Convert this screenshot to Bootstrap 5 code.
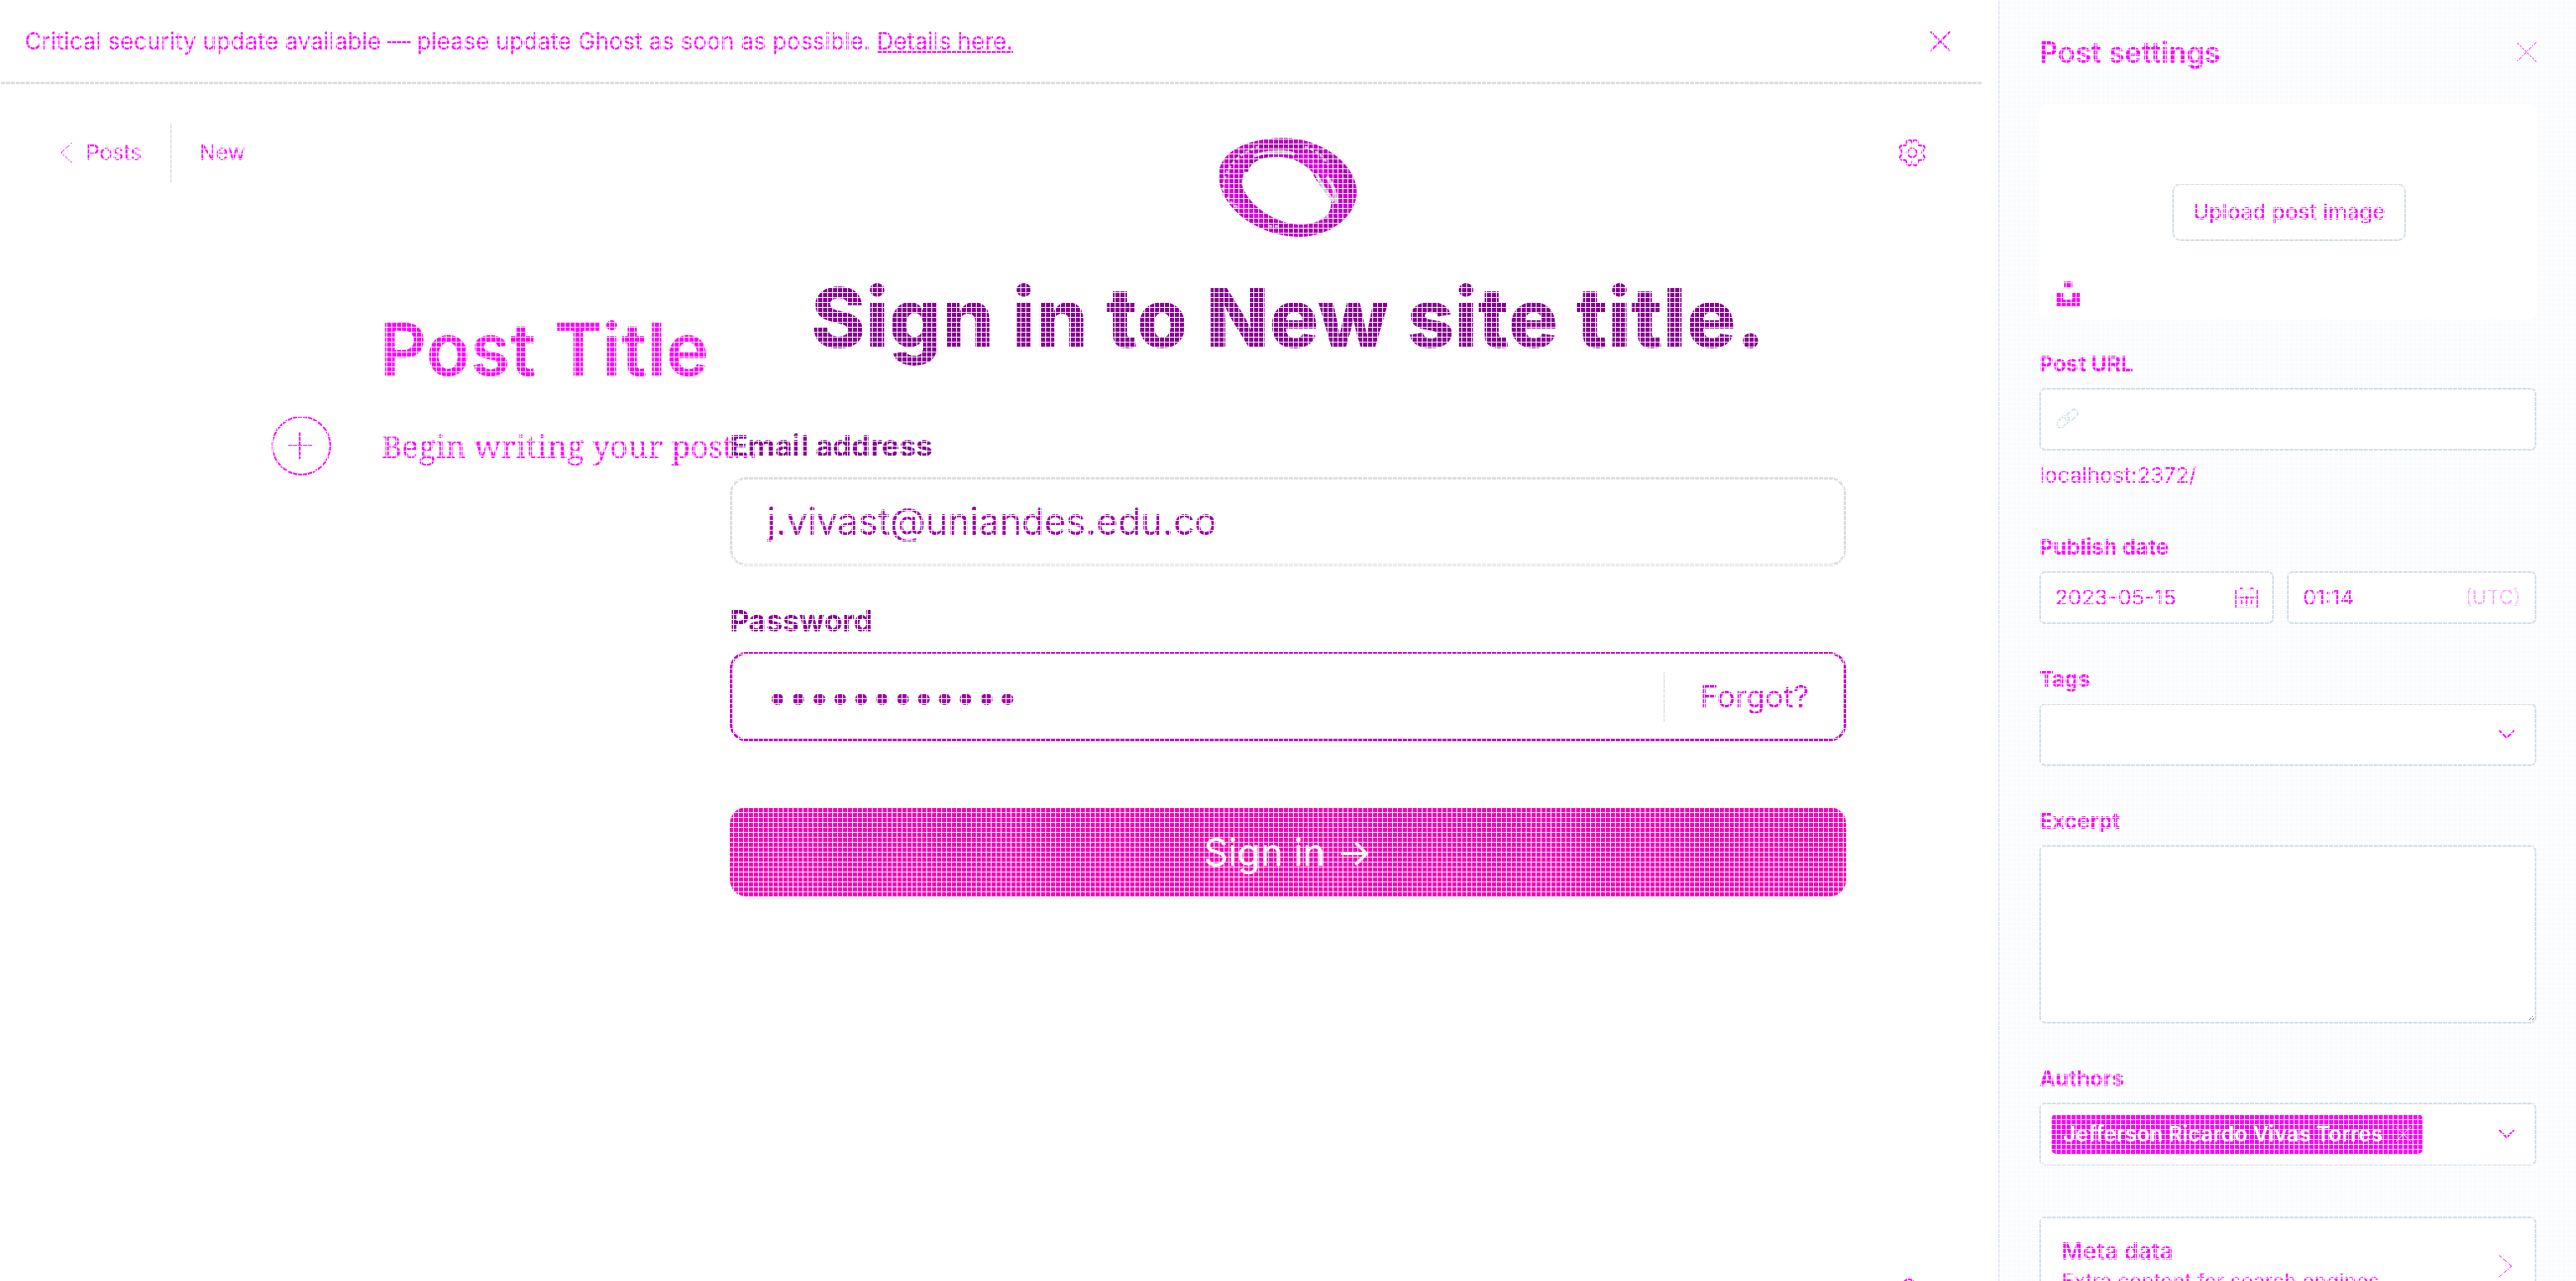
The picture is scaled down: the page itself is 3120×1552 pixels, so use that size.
<!DOCTYPE html>
<html lang="en">
<head>
<meta charset="utf-8">
<title>New - Post editor</title>
<meta name="viewport" content="width=device-width, initial-scale=1">
<link rel="stylesheet" href="https://cdn.jsdelivr.net/npm/bootstrap@5.3.0/dist/css/bootstrap.min.css">
<style>
:root{--ink:#ff00ff;--deep:#860092;--rule:#dedede;--edge:#d2dee6}
body{font-family:Inter,"Liberation Sans",sans-serif;color:var(--ink);font-size:26px;line-height:32px;background:#fff}
a,a:hover{color:var(--ink)}
svg{display:block;fill:none;stroke:currentColor;flex:none}
.shell{height:100vh;overflow:hidden;position:relative}
/* fine white mesh over the whole screen */
.shell::after{content:"";position:absolute;inset:0;z-index:9;pointer-events:none;
 background:repeating-linear-gradient(90deg,#fff 0 1px,transparent 1px 6px),repeating-linear-gradient(#fff 0 1px,transparent 1px 6px)}
.plain{background:none;border:0;padding:0;color:inherit}
.notice{height:102px;border-bottom:3px solid var(--rule);margin-right:20px;padding:0 38px 0 30px;font-size:28px}
.topbar{height:72px;margin-top:47px;padding:0 87px 0 72px}
.crumb{border-right:2px solid #e4e4e4;height:72px;padding-right:34px;margin-right:34px}
.writer{padding-left:328px;margin-top:146px}
.post-title{font-size:88px;line-height:112px;font-weight:600;margin-left:132px}
.add-card{margin-right:60px}
.post-body{font-family:"Noto Serif","Liberation Serif",serif;font-size:38px;line-height:48px}
.help{position:absolute;left:2304px;top:1549px}
.signin{position:absolute;z-index:2;top:166px;left:50%;transform:translateX(-50%);width:1352px;color:var(--deep)}
.signin h1{font-size:100px;line-height:106px;font-weight:800;margin:44px 0 84px}
.signin label{font-size:36px;line-height:36px;font-weight:700;margin-bottom:20px;display:block}
.field{height:108px;border:3px solid var(--rule);border-radius:20px;padding:0 42px}
.field input{border:0;outline:0;background:none;color:#a000a8;font-size:45px;line-height:48px;flex:1;min-width:0;padding:0}
.field.active{border-color:#c400c8}
.field a{border-left:2px solid #d4d4d4;line-height:60px;padding-left:42px;color:#e000e4;font-size:37px}
.signin .next{margin-top:48px}
.go{height:108px;border:0;border-radius:20px;background:#fa00b8;color:#fff;font-size:46px;margin-top:80px}
.side{width:700px;border-left:2px solid #e3ebf3;background:#fafbfd;padding:0 48px}
.side h2{font-size:35px;line-height:40px;font-weight:600;margin:0}
.side-head{height:127px;padding-bottom:2px}
.drop{height:260px;background:#fff;border-radius:8px;position:relative;margin-bottom:38px;padding-left:3px}
.drop .pick{border:2px solid var(--edge);border-radius:10px;height:70px;padding:0 23px;font-weight:500;background:#fff;color:inherit}
.drop .stock{position:absolute;left:20px;bottom:16px}
.side label,.cap{display:block;font-weight:700;line-height:32px;margin-bottom:13px}
.box{background:#fff;border:2px solid var(--edge);border-radius:7px;height:76px;padding:0 17px}
.box input,.box select{border:0;outline:0;background:none;color:inherit;flex:1;min-width:0;padding:0}
.box select{appearance:none}
.box.low{height:64px;flex:14 1 0;min-width:0}
.box.low.wide{flex-grow:15}
.pickbox{padding-right:24px}
textarea.box{display:block;width:100%;height:216px}
.grp{margin-bottom:51px}
.path{margin:14px 0 55px}
.link-icon{color:#d5e0e8}
.utc{color:#f4a8f4;font-size:24px}
.chip{background:var(--ink);color:#fff;font-weight:600;border-radius:5px;height:48px;padding:0 14px;gap:16px}
.tagbox{padding-left:13px}
.meta{background:#fff;border:2px solid var(--edge);border-radius:7px;margin-top:62px;padding:22px 26px 24px 25px;color:inherit;font-size:25px;line-height:36px}
.meta strong{font-size:28px;line-height:36px;font-weight:600;display:block}
</style>
</head>
<body>
<div class="shell d-flex">
 <main class="flex-grow-1">
  <div class="notice d-flex align-items-center justify-content-between">
   <div>Critical security update available — please update Ghost as soon as possible. <a href="#">Details here.</a></div>
   <button class="plain" aria-label="Dismiss"><svg width="24" height="24" stroke-width="2"><path d="M0 0L24 24M24 0L0 24"/></svg></button>
  </div>
  <div class="topbar d-flex align-items-center">
   <nav class="d-flex align-items-center me-auto">
    <a href="#" class="crumb d-flex align-items-center text-decoration-none"><svg class="me-3" width="16" height="26" stroke-width="1"><path d="M15 1L2 13L15 25"/></svg>Posts</a>
    <span>New</span>
   </nav>
   <button class="plain" aria-label="Settings"><svg width="34" height="34" viewBox="0 0 34 34" stroke-width="2"><circle cx="17" cy="17" r="5.5"/><path d="M17 5C18 2 20 1 22 1.500C25 3 23 7 25 8C27 9 31 7 32 10C33 13 29 14 29 17C29 20 33 21 32 24C31 27 27 25 25 26C23 27 25 31 22 32C20 33 18 32 17 29C16 32 14 33 12 32C9 31 11 27 9 26C7 25 3 27 2 24C1 21 5 20 5 17C5 14 1 13 2 10C3 7 7 9 9 8C11 7 9 3 12 1.500C14 1 16 2 17 5Z"/></svg></button>
  </div>
  <section class="writer">
   <div class="post-title">Post Title</div>
   <div class="d-flex align-items-center mt-4">
    <button class="plain add-card" aria-label="Add a card"><svg width="74" height="74" stroke-width="2"><circle cx="37" cy="37" r="35"/><path d="M21 37H51M35 21V53"/></svg></button>
    <div class="post-body">Begin writing your post...</div>
   </div>
  </section>
 </main>
 <button class="plain help" aria-label="Help"><svg width="16" height="16" stroke-width="2"><circle cx="8" cy="8" r="7"/></svg></button>
 <form class="signin">
  <svg class="mx-auto" width="170" height="122" viewBox="0 0 170 122">
   <path fill="#c400c8" stroke="none" fill-rule="evenodd" d="M77 1C120 0 164 28 168 62C171 95 137 121 97 121C51 120 2 88 1 46C2 17 36 2 77 1ZM75 24C48 24 31 30 29 57C35 82 72 108 104 106C128 104 139 93 137 76C132 66 119 56 114 42C105 33 93 25 75 24Z"/>
   <g stroke-width="5"><path stroke="#a400a8" d="M13 36C30 8 76 6 104 12C136 20 160 42 162 66M34 42C36 26 60 18 92 17M62 102C92 120 128 118 146 98"/><path stroke="#e600e6" stroke-width="8" d="M9 48C12 74 32 90 54 98M100 23C122 34 138 50 143 76"/><path stroke="#d4ccd4" stroke-width="4" d="M44 23C62 16 84 17 93 21M119 44C126 60 134 70 140 78M132 48C138 56 144 68 143 80"/><path stroke="#dcb4dc" stroke-width="3" stroke-dasharray="4 3" d="M7 72C3 44 20 20 52 11M12 72C14 78 20 84 26 86M105 12C118 15 128 24 134 34M62 108H76M124 100L134 95"/></g>
  </svg>
  <h1 class="text-center">Sign in to New site title.</h1>
  <label for="em">Email address</label>
  <div class="field d-flex align-items-center"><input id="em" type="email" value="j.vivast@uniandes.edu.co"></div>
  <label for="pw" class="next">Password</label>
  <div class="field active d-flex align-items-center"><input id="pw" type="password" value="abcdefghijkl"><a href="#" class="text-decoration-none">Forgot?</a></div>
  <button class="go w-100" type="button">Sign in →</button>
 </form>
 <aside class="side flex-shrink-0">
  <div class="side-head d-flex align-items-center justify-content-between"><h2>Post settings</h2><button class="plain" aria-label="Close"><svg width="24" height="24" stroke-width="1"><path d="M0 0L24 24M24 0L0 24"/></svg></button></div>
  <div class="drop d-flex align-items-center justify-content-center">
   <button class="pick">Upload post image</button>
   <button class="plain stock" aria-label="Stock photos"><svg width="30" height="30"><path fill="currentColor" stroke="none" d="M10 0H20V8H10ZM1 13H9V22H20V13H29V30H1Z"/></svg></button>
  </div>
  <div>
   <label for="url">Post URL</label>
   <div class="box d-flex align-items-center"><svg class="link-icon me-2" width="30" height="30" viewBox="0 0 30 30" stroke-width="2"><rect x="1" y="14" width="17" height="9" rx="4.500" transform="rotate(-42 9 18)"/><rect x="12" y="6" width="17" height="9" rx="4.500" transform="rotate(-42 20 11)"/></svg><input id="url" type="text"></div>
  </div>
  <p class="path">localhost:2372/</p>
  <div class="grp">
   <label for="day">Publish date</label>
   <div class="d-flex gap-3">
    <div class="box low d-flex align-items-center"><input id="day" type="text" value="2023-05-15"><svg width="28" height="28" viewBox="0 0 28 28" stroke-width="1.500"><path stroke="#e4e0e4" d="M1 5H27V26H1ZM1 10H27M7 20H21"/><path d="M1 5V26M27 5V26M14 12V24M4 14H25M8 17V23M20 17V23M6 4C6 2 9 2 9 4M19 4C19 2 22 2 22 4"/></svg></div>
    <div class="box low wide d-flex align-items-center"><input id="time" type="text" value="01:14" aria-label="Publish time"><span class="utc">(UTC)</span></div>
   </div>
  </div>
  <div class="grp">
   <label for="tags">Tags</label>
   <div class="box pickbox d-flex align-items-center"><select id="tags"><option></option></select><svg width="20" height="12" stroke-width="2"><path d="M1 1L10 10L19 1"/></svg></div>
  </div>
  <div class="grp">
   <label for="exc">Excerpt</label>
   <textarea class="box" id="exc"></textarea>
  </div>
  <div>
   <div class="cap">Authors</div>
   <div class="box pickbox tagbox d-flex align-items-center justify-content-between">
    <span class="chip d-flex align-items-center">Jefferson Ricardo Vivas Torres<button class="plain" aria-label="Remove author"><svg width="18" height="18" stroke-width="1"><path d="M0 0L18 18M18 0L0 18"/></svg></button></span>
    <button class="plain" aria-label="Choose authors"><svg width="20" height="12" stroke-width="2"><path d="M1 1L10 10L19 1"/></svg></button>
   </div>
  </div>
  <button class="meta w-100 text-start d-flex align-items-center justify-content-between"><span><strong>Meta data</strong>Extra content for search engines</span><svg width="18" height="28" stroke-width="1"><path d="M1 1L16 14L1 27"/></svg></button>
 </aside>
</div>
<script src="https://cdn.jsdelivr.net/npm/bootstrap@5.3.0/dist/js/bootstrap.bundle.min.js"></script>
</body>
</html>
